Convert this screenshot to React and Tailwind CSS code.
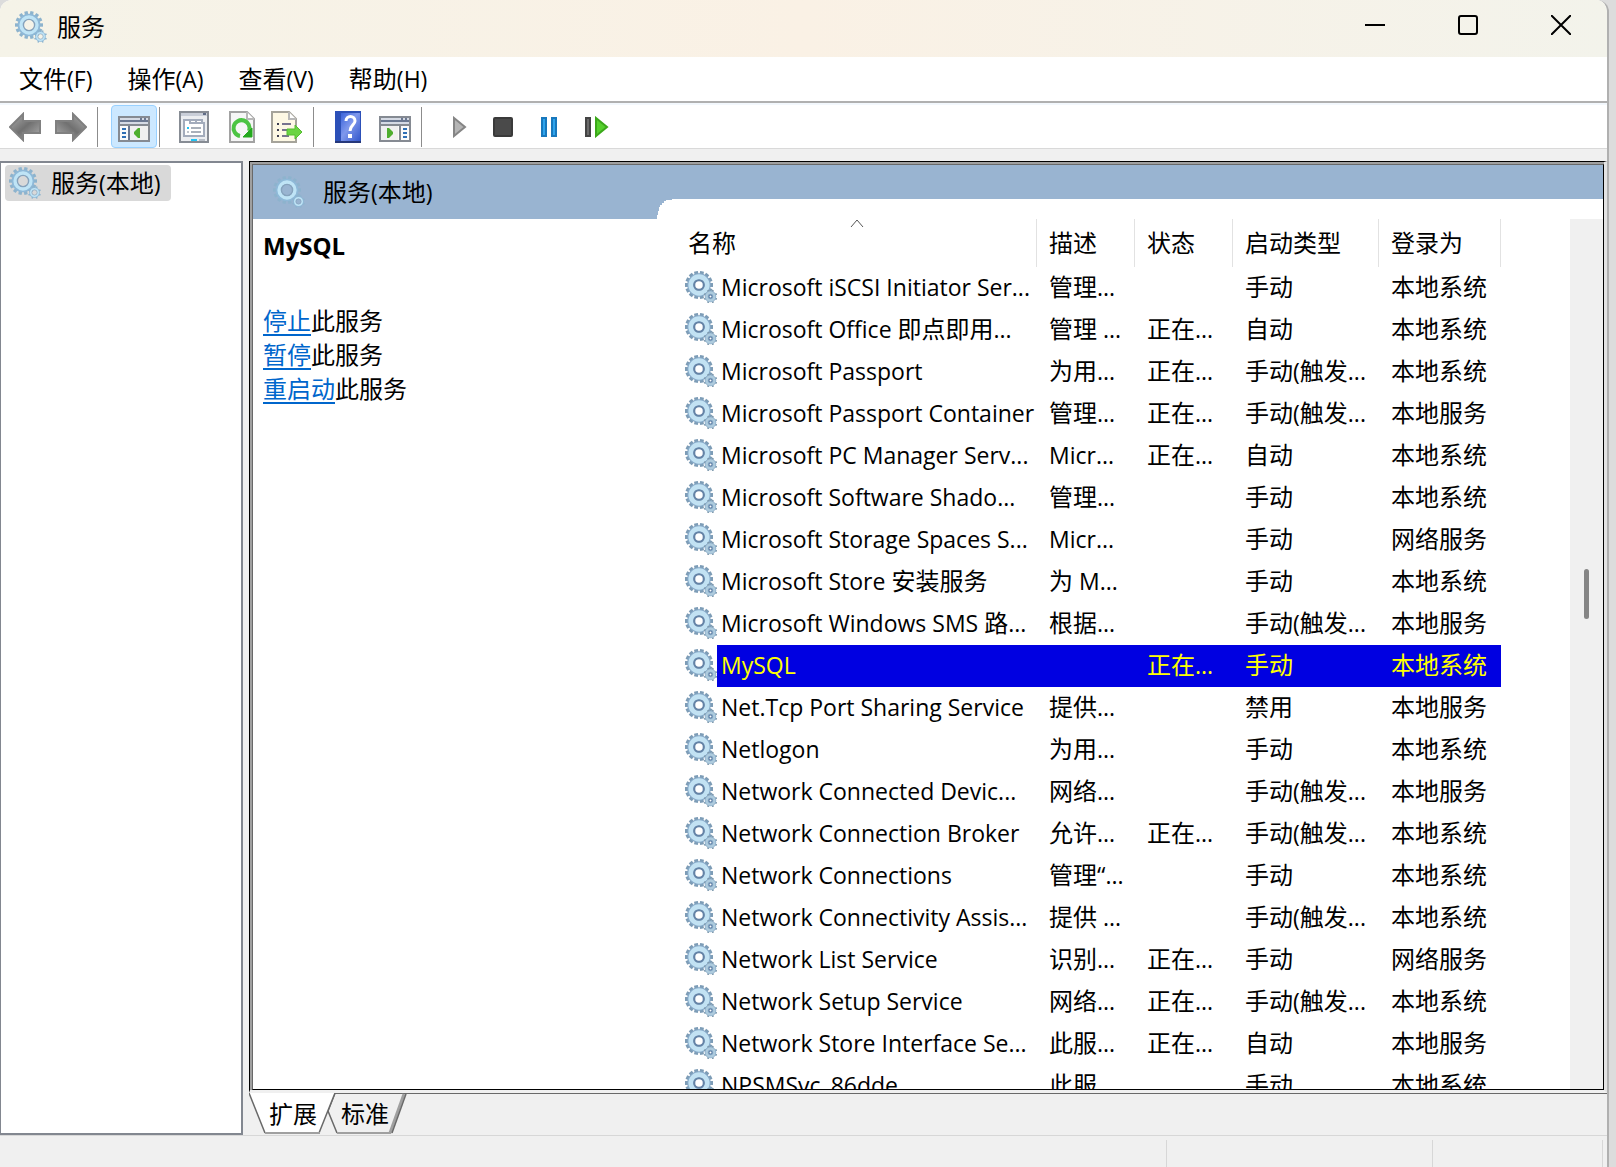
import { useState } from "react";

const services = [
  { name: "Microsoft iSCSI Initiator Ser...", desc: "管理...", status: "", startup: "手动", logon: "本地系统" },
  { name: "Microsoft Office 即点即用...", desc: "管理 ...", status: "正在...", startup: "自动", logon: "本地系统" },
  { name: "Microsoft Passport", desc: "为用...", status: "正在...", startup: "手动(触发...", logon: "本地系统" },
  { name: "Microsoft Passport Container", desc: "管理...", status: "正在...", startup: "手动(触发...", logon: "本地服务" },
  { name: "Microsoft PC Manager Serv...", desc: "Micr...", status: "正在...", startup: "自动", logon: "本地系统" },
  { name: "Microsoft Software Shado...", desc: "管理...", status: "", startup: "手动", logon: "本地系统" },
  { name: "Microsoft Storage Spaces S...", desc: "Micr...", status: "", startup: "手动", logon: "网络服务" },
  { name: "Microsoft Store 安装服务", desc: "为 M...", status: "", startup: "手动", logon: "本地系统" },
  { name: "Microsoft Windows SMS 路...", desc: "根据...", status: "", startup: "手动(触发...", logon: "本地服务" },
  { name: "MySQL", desc: "", status: "正在...", startup: "手动", logon: "本地系统" },
  { name: "Net.Tcp Port Sharing Service", desc: "提供...", status: "", startup: "禁用", logon: "本地服务" },
  { name: "Netlogon", desc: "为用...", status: "", startup: "手动", logon: "本地系统" },
  { name: "Network Connected Devic...", desc: "网络...", status: "", startup: "手动(触发...", logon: "本地服务" },
  { name: "Network Connection Broker", desc: "允许...", status: "正在...", startup: "手动(触发...", logon: "本地系统" },
  { name: "Network Connections", desc: "管理“...", status: "", startup: "手动", logon: "本地系统" },
  { name: "Network Connectivity Assis...", desc: "提供 ...", status: "", startup: "手动(触发...", logon: "本地系统" },
  { name: "Network List Service", desc: "识别...", status: "正在...", startup: "手动", logon: "网络服务" },
  { name: "Network Setup Service", desc: "网络...", status: "正在...", startup: "手动(触发...", logon: "本地系统" },
  { name: "Network Store Interface Se...", desc: "此服...", status: "正在...", startup: "自动", logon: "本地服务" },
  { name: "NPSMSvc_86dde", desc: "此服...", status: "", startup: "手动", logon: "本地系统" },
];

const menus = ["文件(F)", "操作(A)", "查看(V)", "帮助(H)"];

// Latin runs are set slightly smaller than the Chinese glyphs around them
const Label = ({ text }) =>
  text
    .split(/([\u2018-\u201d\u4e00-\u9fff]+)/)
    .filter(Boolean)
    .map((part, i) =>
      /[\u2018-\u201d\u4e00-\u9fff]/.test(part) ? (
        part
      ) : (
        <span key={i} className="text-[23px]">
          {part}
        </span>
      )
    );

const Gear = ({ cx, cy, r, teeth, hole, fill, edge }) => (
  <g>
    {Array.from({ length: teeth }, (_, i) => (
      <rect
        key={i}
        x={cx - r * 0.14}
        y={cy - r}
        width={r * 0.28}
        height={r}
        fill={edge}
        transform={`rotate(${((i + 0.5) * 360) / teeth} ${cx} ${cy})`}
      />
    ))}
    <circle cx={cx} cy={cy} r={r * 0.84} fill="#86a9c8" />
    <circle cx={cx} cy={cy} r={r * 0.58} fill="none" stroke={fill} strokeWidth={r * 0.36} />
    <circle cx={cx} cy={cy} r={hole} fill="#ffffff" stroke="#6483a6" strokeWidth={r * 0.15} />
  </g>
);

const SoftGear = ({ cx, cy, r, teeth }) => (
  <g>
    {Array.from({ length: teeth }, (_, i) => (
      <rect
        key={i}
        x={cx - r * 0.12}
        y={cy - r}
        width={r * 0.24}
        height={r * 0.4}
        fill="#8db3cd"
        transform={`rotate(${((i + 0.5) * 360) / teeth} ${cx} ${cy})`}
      />
    ))}
    <circle cx={cx} cy={cy} r={r * 0.64} fill="none" stroke="#8fb9d8" strokeWidth={r * 0.34} />
    <circle cx={cx} cy={cy} r={r * 0.56} fill="none" stroke="#bfe4f6" strokeWidth={r * 0.26} />
    <circle cx={cx} cy={cy} r={r * 0.4} fill="none" stroke="#86a3bd" strokeWidth={r * 0.1} />
  </g>
);

const GearsIcon = ({ className = "", soft = false }) => (
  <svg viewBox="0 0 32 32" className={`size-8 shrink-0 ${className}`} aria-hidden="true">
    {soft ? (
      <>
        <SoftGear cx={14} cy={14} r={14} teeth={14} />
        <SoftGear cx={25.5} cy={25.5} r={6.5} teeth={8} />
      </>
    ) : (
      <>
        <Gear cx={14} cy={14} r={14} teeth={14} hole={4.8} fill="#c2e2f3" edge="#7d9cb6" />
        <Gear cx={25.5} cy={25.5} r={6.8} teeth={8} hole={1.5} fill="#aecbdd" edge="#7d98ac" />
      </>
    )}
  </svg>
);

const ArrowIcon = ({ flip = false }) => (
  <svg viewBox="0 0 32 30" className="h-[30px] w-8" aria-hidden="true">
    <defs>
      <linearGradient id="arrow" x1="0" y1="0" x2="1" y2="1">
        <stop offset="0" stopColor="#b0b0b0" />
        <stop offset="0.5" stopColor="#707070" />
        <stop offset="1" stopColor="#b0b0b0" />
      </linearGradient>
    </defs>
    <path
      d="M1 15 L14 2 V9 H31 V21 H14 V28 Z"
      fill="url(#arrow)"
      stroke="#808080"
      strokeWidth="2"
      transform={flip ? "translate(32 0) scale(-1 1)" : undefined}
    />
  </svg>
);

const PaneIcon = ({ flip = false }) => (
  <svg viewBox="0 0 32 26" className="h-[26px] w-8" aria-hidden="true">
    <rect x="1" y="1" width="30" height="24" fill="#fafafa" stroke="#858a92" strokeWidth="2" />
    <rect x="2" y="2" width="28" height="2" fill="#d5dae4" />
    <rect x="2" y="4" width="28" height="2" fill="#6b7891" />
    <rect x="22" y="2" width="2" height="2" fill="#6b7891" />
    <rect x="26" y="2" width="2" height="2" fill="#6b7891" />
    <rect x="2" y="6" width="28" height="2" fill="#d5dae4" />
    <rect x="2" y="8" width="28" height="2" fill="#858a92" />
    {flip ? (
      <>
        <rect x="2" y="10" width="17" height="14" fill="#f0f0f0" />
        <path d="M21 10 V24" stroke="#858a92" strokeWidth="2" />
        <path d="M24 13 H28 M24 17 H28 M24 21 H28" stroke="#2f6fb5" strokeWidth="2" />
        <path d="M8 12 V22 H10 L14 18 V16 L10 12 Z" fill="#4fae2e" />
      </>
    ) : (
      <>
        <rect x="12" y="10" width="18" height="14" fill="#f0f0f0" />
        <path d="M11 10 V24" stroke="#6b7891" strokeWidth="2" />
        <path d="M4 13 H8 M4 17 H8 M4 21 H8" stroke="#2f6fb5" strokeWidth="2" />
        <path d="M22 12 V22 H20 L16 18 V16 L20 12 Z" fill="#4fae2e" />
      </>
    )}
  </svg>
);

const PropertiesIcon = () => (
  <svg viewBox="0 0 30 32" className="h-8 w-[30px]" aria-hidden="true">
    <rect x="1" y="1" width="28" height="30" fill="#eceef1" stroke="#878c94" strokeWidth="2" />
    <rect x="2" y="2" width="26" height="3" fill="#c9ced8" />
    <rect x="24" y="2" width="3" height="2" fill="#5f6c86" />
    <path d="M5 9 H23 V12 H25 V25 H5 Z" fill="#ffffff" stroke="#a3acbc" strokeWidth="2" />
    <path d="M11 9 V12 H23 M17 9 V12" fill="none" stroke="#a3acbc" strokeWidth="2" />
    <rect x="8" y="16" width="2" height="2" fill="#22c3f3" />
    <path d="M12 17 H22 M12 21 H22" stroke="#a9b0ba" strokeWidth="2" />
    <rect x="8" y="20" width="2" height="2" fill="#c0c5cc" />
    <rect x="12" y="28" width="6" height="2" fill="#22c3f3" />
    <rect x="20" y="28" width="6" height="2" fill="#b9bfc8" />
  </svg>
);

const RefreshIcon = () => (
  <svg viewBox="0 0 26 32" className="h-8 w-[26px]" aria-hidden="true">
    <path d="M1 1 H18 L25 8 V31 H1 Z" fill="#f6f6f6" stroke="#a2a2a2" strokeWidth="2" />
    <path d="M18 1 V8 H25" fill="#ffffff" stroke="#b8b8b8" strokeWidth="2" />
    <path d="M11 25 A8 8 0 1 1 20 20" fill="none" stroke="#4cc443" strokeWidth="4" />
    <path d="M14 26 L23 26 L23 17 Z" fill="#24a91e" stroke="#24a91e" />
  </svg>
);

const ExportIcon = () => (
  <svg viewBox="0 0 32 32" className="size-8" aria-hidden="true">
    <path d="M1 1 H18 L25 8 V31 H1 Z" fill="#fdf8e4" stroke="#a5a39a" strokeWidth="2" />
    <path d="M18 1 V8 H25" fill="#ffffff" stroke="#b8b8b8" strokeWidth="2" />
    <path d="M6 13 H8 M6 19 H8 M6 25 H8" stroke="#3c3c50" strokeWidth="2" />
    <path d="M11 13 H20 M11 19 H17 M11 25 H18" stroke="#77738e" strokeWidth="2" />
    <path d="M16 18 H24 V14 L31 21 L24 28 V24 H16 Z" fill="#6bd442" stroke="#54bd30" />
  </svg>
);

const HelpIcon = () => (
  <svg viewBox="0 0 26 32" className="h-8 w-[26px]" aria-hidden="true">
    <defs>
      <linearGradient id="help" x1="0" y1="0" x2="1" y2="1">
        <stop offset="0" stopColor="#3a63da" />
        <stop offset="0.45" stopColor="#7f98ec" />
        <stop offset="1" stopColor="#3458cc" />
      </linearGradient>
    </defs>
    <rect width="26" height="32" fill="#2c50b8" />
    <rect x="6" y="2" width="19" height="28" fill="url(#help)" />
    <rect y="30" width="26" height="2" fill="#26387a" />
    <path d="M11 10 C11 4 20 4 20 10 C20 14 15 14 15 20" fill="none" stroke="#ffffff" strokeWidth="3" />
    <rect x="13" y="23" width="4" height="4" fill="#ffffff" />
  </svg>
);

const StartIcon = () => (
  <svg viewBox="0 0 14 22" className="h-[22px] w-[14px]" aria-hidden="true">
    <path d="M1 2 V20 L12 11 Z" fill="#b5b5b5" stroke="#858585" strokeWidth="2" />
  </svg>
);

const StopIcon = () => (
  <svg viewBox="0 0 20 20" className="size-5" aria-hidden="true">
    <rect x="1" y="1" width="18" height="18" rx="1" fill="#4a4a4a" stroke="#3a3a3a" strokeWidth="2" />
  </svg>
);

const PauseIcon = () => (
  <svg viewBox="0 0 16 20" className="h-5 w-4" aria-hidden="true">
    <rect x="1" y="1" width="4" height="18" fill="#2fa4ec" stroke="#1878bd" strokeWidth="2" />
    <rect x="11" y="1" width="4" height="18" fill="#2fa4ec" stroke="#1878bd" strokeWidth="2" />
  </svg>
);

const RestartIcon = () => (
  <svg viewBox="0 0 24 22" className="h-[22px] w-6" aria-hidden="true">
    <rect x="1" y="2" width="4" height="18" fill="#6a6a6a" stroke="#444444" strokeWidth="2" />
    <path d="M11 2 V20 L22 11 Z" fill="#55d02c" stroke="#3ba81a" strokeWidth="2" />
  </svg>
);

const ToolButton = ({ label, className = "", children }) => (
  <button type="button" aria-label={label} className={`flex shrink-0 items-center ${className}`}>
    {children}
  </button>
);

const Divider = ({ className = "" }) => (
  <div className={`h-10 w-px shrink-0 bg-[#8c8c8c] ${className}`} />
);

const TitleBar = () => (
  <header className="flex h-[57px] items-center bg-linear-to-r from-[#f5f3e8] via-[#faf1e5] to-[#f3f3eb] pb-1 pl-[15px]">
    <GearsIcon soft />
    <h1 className="ml-2.5 flex-1 leading-8">服务</h1>
    <div className="flex h-full w-[278px]">
      <button type="button" aria-label="最小化" className="flex flex-1 items-center justify-center pb-1">
        <svg viewBox="0 0 20 20" className="size-5">
          <path d="M0 10 H20" stroke="#000" strokeWidth="2" />
        </svg>
      </button>
      <button type="button" aria-label="最大化" className="flex flex-1 items-center justify-center pb-1">
        <svg viewBox="0 0 20 20" className="size-5">
          <rect x="1" y="1" width="18" height="18" rx="2" fill="none" stroke="#000" strokeWidth="2" />
        </svg>
      </button>
      <button type="button" aria-label="关闭" className="flex flex-1 items-center justify-center pb-1">
        <svg viewBox="0 0 20 20" className="size-5">
          <path d="M0 0 L20 20 M20 0 L0 20" stroke="#000" strokeWidth="2" />
        </svg>
      </button>
    </div>
  </header>
);

const MenuBar = () => (
  <nav className="flex h-[46px] items-center gap-[35px] border-b-2 border-[#b0b0b0] pl-[19px]">
    {menus.map((menu) => (
      <button type="button" key={menu} className="leading-8 whitespace-nowrap">
        <Label text={menu} />
      </button>
    ))}
  </nav>
);

const Toolbar = () => (
  <div className="flex h-[46px] items-center border-t-2 border-b border-t-[#f3f8fd] border-b-[#d9d9d9] bg-white pl-[9px]">
    <ToolButton label="后退">
      <ArrowIcon />
    </ToolButton>
    <ToolButton label="前进" className="ml-3.5">
      <ArrowIcon flip />
    </ToolButton>
    <Divider className="ml-2.5" />
    <ToolButton label="显示/隐藏控制台树" className="ml-[13px] h-[43px] w-[46px] justify-center rounded-sm border border-[#99d1ff] bg-[#cce8ff] pt-1">
      <PaneIcon />
    </ToolButton>
    <Divider className="ml-0.5" />
    <ToolButton label="属性" className="ml-[19px]">
      <PropertiesIcon />
    </ToolButton>
    <ToolButton label="刷新" className="ml-5">
      <RefreshIcon />
    </ToolButton>
    <ToolButton label="导出列表" className="ml-4">
      <ExportIcon />
    </ToolButton>
    <Divider className="ml-2.5" />
    <ToolButton label="帮助" className="ml-[21px]">
      <HelpIcon />
    </ToolButton>
    <ToolButton label="显示/隐藏操作窗格" className="ml-[18px] pt-1">
      <PaneIcon flip />
    </ToolButton>
    <Divider className="ml-2.5" />
    <ToolButton label="启动服务" className="ml-[31px]">
      <StartIcon />
    </ToolButton>
    <ToolButton label="停止服务" className="ml-[26px]">
      <StopIcon />
    </ToolButton>
    <ToolButton label="暂停服务" className="ml-7">
      <PauseIcon />
    </ToolButton>
    <ToolButton label="重启动服务" className="ml-7">
      <RestartIcon />
    </ToolButton>
  </div>
);

const actions = ["停止", "暂停", "重启动"];

const DetailPane = ({ name }) => (
  <section className="w-[404px] shrink-0">
    <div className="flex h-[54px] items-center bg-[#99b4d1] pl-5">
      <GearsIcon soft />
      <h2 className="ml-[18px] leading-8">
        <Label text="服务(本地)" />
      </h2>
    </div>
    <div className="pt-2.5 pl-[10px]">
      <h3 className="leading-[34px] font-bold">{name}</h3>
      <ul className="mt-[41px]">
        {actions.map((action) => (
          <li key={action} className="leading-[34px]">
            <a href="#" className="text-[#0066cc] underline decoration-2 underline-offset-4">
              {action}
            </a>
            此服务
          </li>
        ))}
      </ul>
    </div>
  </section>
);

const ServiceTable = ({ selected, onSelect }) => {
  const th = "h-12 border-r border-[#e2e2e2] pb-0 pl-[12px] text-left font-normal";
  const td = "h-[42px] pb-0.5 pl-[12px] whitespace-nowrap";

  return (
    <table className="w-[816px] table-fixed border-separate border-spacing-0 leading-8">
      <colgroup>
        <col className="w-[352px]" />
        <col className="w-[98px]" />
        <col className="w-[98px]" />
        <col className="w-[146px]" />
        <col className="w-[122px]" />
      </colgroup>
      <thead>
        <tr>
          <th className="relative h-12 border-r border-[#e2e2e2] pb-0 pl-[3px] text-left font-normal">
            名称
            <svg viewBox="0 0 14 8" className="absolute top-0 left-[165px] h-2 w-3.5">
              <path d="M1 8 L7 1 L13 8" fill="none" stroke="#555" />
            </svg>
          </th>
          <th className={th}>描述</th>
          <th className={th}>状态</th>
          <th className={th}>启动类型</th>
          <th className={th}>登录为</th>
        </tr>
      </thead>
      <tbody>
        {services.map((s) => {
          const active = s.name === selected;
          const fill = active ? "bg-[#0000e1] text-[#ffff00]" : "";
          return (
            <tr key={s.name} onClick={() => onSelect(s.name)}>
              <td className="h-[42px] p-0 whitespace-nowrap">
                <div className="flex h-[42px] items-center">
                  <GearsIcon className="mb-0.5" />
                  <div className={`flex h-full flex-1 items-center pb-0.5 pl-1 ${fill}`}>
                    <span>
                      <Label text={s.name} />
                    </span>
                  </div>
                </div>
              </td>
              <td className={`${td} ${fill}`}>
                <Label text={s.desc} />
              </td>
              <td className={`${td} ${fill}`}>
                <Label text={s.status} />
              </td>
              <td className={`${td} ${fill}`}>
                <Label text={s.startup} />
              </td>
              <td className={`${td} ${fill}`}>
                <Label text={s.logon} />
              </td>
            </tr>
          );
        })}
      </tbody>
    </table>
  );
};

const ViewTabs = () => (
  <div className="relative flex h-[42px] shrink-0 border-t border-[#696969]">
    <svg viewBox="0 0 160 42" className="absolute -top-px left-0 h-[42px] w-40" aria-hidden="true">
      <path d="M86 0 L79 18 L88 40 H142 L157 0 Z" fill="#f0f0f0" />
      <path d="M86 0 H157" stroke="#696969" strokeWidth="2" />
      <path d="M86 0 L79 18 L88 40" fill="none" stroke="#696969" strokeWidth="1.5" />
      <path d="M88 40 H142" stroke="#a0a0a0" strokeWidth="2" />
      <path d="M155 1 L141 40" stroke="#a0a0a0" strokeWidth="3" />
      <path d="M157 1 L143 40" stroke="#696969" strokeWidth="1.5" />
      <path d="M0 0 L16 40 H70 L86 0 Z" fill="#ffffff" />
      <path d="M0 0 L16 40 M70 40 L86 0" fill="none" stroke="#696969" strokeWidth="1.5" />
      <path d="M16 40 H71" stroke="#a0a0a0" strokeWidth="2" />
    </svg>
    <button type="button" className="relative ml-5 h-10 leading-8">
      扩展
    </button>
    <button type="button" className="relative ml-6 h-10 leading-8">
      标准
    </button>
  </div>
);

const App = () => {
  const [selected, setSelected] = useState("MySQL");

  return (
    <div className="flex h-screen overflow-hidden bg-[#dcdcdc] pr-[7px] font-['Open_Sans','Noto_Sans_CJK_SC',sans-serif] text-2xl text-black">
      <div className="flex min-w-0 flex-1 flex-col overflow-hidden rounded-t-xl border-r-2 border-[#b0b0b0] bg-white">
        <TitleBar />
        <MenuBar />
        <Toolbar />

        <main className="flex min-h-0 flex-1 gap-1.5 bg-[#f0f0f0] pt-3">
          {/* Console tree */}
          <aside className="w-[243px] shrink-0 border-2 border-l border-[#828790] bg-white pt-0.5 pl-1">
            <button type="button" className="flex h-9 items-center rounded-sm bg-[#d9d9d9] pr-2.5 pl-1 leading-8">
              <GearsIcon soft />
              <span className="ml-2.5">
                <Label text="服务(本地)" />
              </span>
            </button>
          </aside>

          {/* Result pane */}
          <div className="flex min-w-0 flex-1 flex-col">
            <div className="flex min-h-0 flex-1 border-t border-r-3 border-b-3 border-l border-t-black border-r-[#e3e3e3] border-b-[#f0f0f0] border-l-black bg-white">
              <div className="flex min-h-0 min-w-0 flex-1 border-t-2 border-l-2 border-[#a0a0a0]">
                <div className="flex min-h-0 min-w-0 flex-1 overflow-hidden border border-t-[#696969] border-r-black border-b-black border-l-[#696969]">
                  <DetailPane name={selected} />
                  <section className="flex min-w-0 flex-1 flex-col">
                    <div className="h-[34px] shrink-0 bg-[#99b4d1]" />
                    <svg viewBox="0 0 16 20" className="h-5 w-4 shrink-0" aria-hidden="true">
                      <path d="M0 0 H15 V1 H9 V2 H7 V4 H5 V6 H3 V8 H2 V12 H1 V16 H0 Z" fill="#99b4d1" />
                    </svg>
                    <div className="flex min-h-0 flex-1">
                      <div className="min-w-0 flex-1 overflow-hidden pl-7">
                        <ServiceTable selected={selected} onSelect={setSelected} />
                      </div>
                      <div className="flex w-[33px] shrink-0 justify-center bg-[#f0f0f0] pt-[350px]">
                        <div className="h-[50px] w-[5px] rounded-full bg-[#858585]" />
                      </div>
                    </div>
                  </section>
                </div>
              </div>
            </div>
            <ViewTabs />
          </div>
        </main>

        <footer className="flex h-8 shrink-0 justify-end border-t border-[#d7d7d7] bg-[#f0f0f0] pt-1 pr-1">
          <div className="w-[266px] border-l border-[#d7d7d7]" />
          <div className="w-[171px] border-x border-[#d7d7d7]" />
        </footer>
      </div>
    </div>
  );
};

export default App;
